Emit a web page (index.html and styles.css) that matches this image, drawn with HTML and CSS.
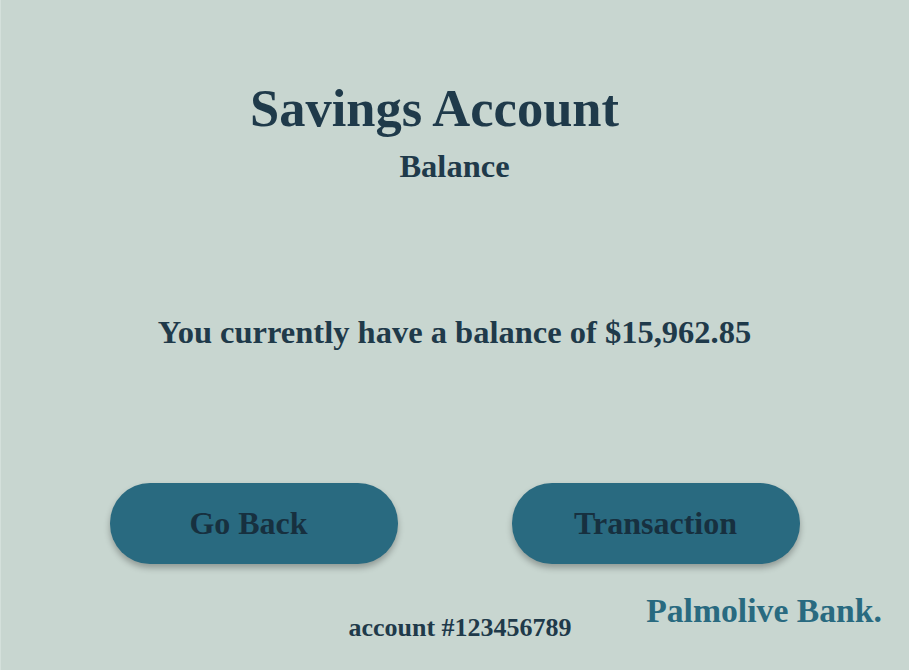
FILE: index.html
```html
<!DOCTYPE html>
<html lang="en">
<head>
<meta charset="utf-8">
<title>Savings Account</title>
<link rel="stylesheet" href="styles.css">
</head>
<body>
<main class="page">
  <header class="head">
    <h1 class="title">Savings Account</h1>
    <h2 class="subtitle">Balance</h2>
  </header>
  <p class="balance">You currently have a balance of $15,962.85</p>
  <div class="actions">
    <button class="btn btn-back" type="button">Go Back</button>
    <button class="btn" type="button">Transaction</button>
  </div>
  <footer class="foot">
    <span class="spacer"></span>
    <span class="account">account #123456789</span>
    <span class="brand">Palmolive Bank.</span>
  </footer>
</main>
</body>
</html>
```

FILE: styles.css
```css
html, body {
  margin: 0;
  padding: 0;
}
body {
  background: #c8d6d0;
  width: 909px;
  height: 670px;
  overflow: hidden;
  font-family: "Liberation Serif", "DejaVu Serif", serif;
  color: #1f3a4a;
}
.page {
  display: flex;
  flex-direction: column;
  align-items: center;
  height: 670px;
  box-sizing: border-box;
  box-shadow: inset 1px 0 0 #d4e0db;
}
.head {
  display: flex;
  flex-direction: column;
  align-items: center;
  margin-top: 78px;
}
.title {
  margin: 0 20px 0 -20px;
  font-size: 52.5px;
  font-weight: 700;
  line-height: 60px;
}
.subtitle {
  margin: 10px 0 0;
  font-size: 32.5px;
  font-weight: 700;
  line-height: 36px;
}
.balance {
  margin: 130px 0 0;
  font-size: 32.5px;
  font-weight: 700;
  line-height: 36px;
}
.actions {
  display: flex;
  gap: 114px;
  margin-top: 133px;
}
.btn {
  width: 288px;
  height: 81px;
  border: none;
  border-radius: 40px;
  background: #296a80;
  color: #17303f;
  font-family: inherit;
  font-size: 32px;
  font-weight: 700;
  box-shadow: 0 4px 6px rgba(0, 0, 0, 0.28);
  padding: 0;
}
.btn-back {
  padding-right: 10px;
}
.foot {
  display: grid;
  grid-template-columns: 1fr auto 1fr;
  width: 100%;
  margin-top: 29px;
  align-items: start;
}
.account {
  margin-top: 20px;
  margin-left: 11px;
  font-size: 26px;
  line-height: 30px;
  font-weight: 700;
}
.brand {
  justify-self: end;
  margin-right: 27px;
  font-size: 33.7px;
  line-height: 36px;
  font-weight: 700;
  color: #296a80;
}
```
